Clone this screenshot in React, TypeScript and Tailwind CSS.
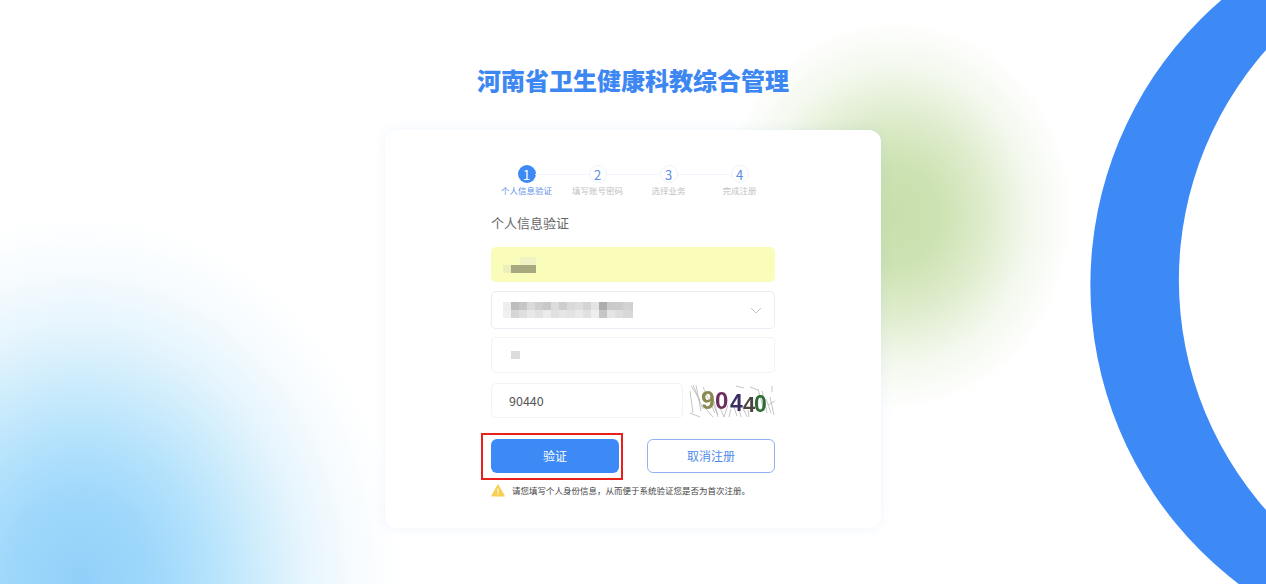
const STEPS = [
  { num: 1, label: '个人信息验证' },
  { num: 2, label: '填写账号密码' },
  { num: 3, label: '选择业务' },
  { num: 4, label: '完成注册' },
]

// mosaic cells of the blurred-out select value
const SELECT_TOP = ['bg-[#eeeeee]', 'bg-[#bdbdbd]', 'bg-[#c6c6c6]', 'bg-[#dadada]', 'bg-[#cfcfcf]', 'bg-[#c8c8c8]', 'bg-[#dcdcdc]', 'bg-[#cdcdcd]', 'bg-[#d9d9d9]', 'bg-[#dedede]', 'bg-[#d4d4d4]', 'bg-[#e4e4e4]', 'bg-[#adadad]', 'bg-[#c9c9c9]', 'bg-[#cbcbcb]', 'bg-[#d2d2d2]']
const SELECT_BOTTOM = ['bg-[#f0f0f0]', 'bg-[#d6d6d6]', 'bg-[#dfdfdf]', 'bg-[#e8e8e8]', 'bg-[#e2e2e2]', 'bg-[#ebebeb]', 'bg-[#e0e0e0]', 'bg-[#e6e6e6]', 'bg-[#e3e3e3]', 'bg-[#e9e9e9]', 'bg-[#e1e1e1]', 'bg-[#eeeeee]', 'bg-[#c6c6c6]', 'bg-[#e5e5e5]', 'bg-[#dedede]', 'bg-[#d8d8d8]']

function StepBar() {
  return (
    <div className="flex w-[284px] justify-center">
      {STEPS.map((step, i) => (
        <div key={step.num} className="relative flex w-[71px] shrink-0 flex-col items-center">
          {i < STEPS.length - 1 && (
            <div className="absolute left-[44px] top-[9px] h-px w-[53px] bg-[#eef4fd]" />
          )}
          <div
            className={
              i === 0
                ? 'flex h-[18px] w-[18px] items-center justify-center rounded-full bg-[#3d8af7] text-[13px] leading-none text-white'
                : 'flex h-[18px] w-[18px] items-center justify-center rounded-full border border-[#eef3fb] bg-white text-[13px] leading-none text-[#5a8ddf]'
            }
          >
            {step.num}
          </div>
          <div
            className={
              i === 0
                ? 'mt-px whitespace-nowrap text-[8.5px] leading-[12px] text-[#5b8fe6]'
                : 'mt-px whitespace-nowrap text-[8.5px] leading-[12px] text-[#c2c2c2]'
            }
          >
            {step.label}
          </div>
        </div>
      ))}
    </div>
  )
}

function Captcha() {
  return (
    <svg width="87" height="35" viewBox="0 0 87 35" className="shrink-0 blur-[0.3px]">
      <g stroke="#b8b8b8" strokeWidth="0.8" fill="none">
        <path d="M3 3l9 14M8 2l5 26M2 8l3 22M5 2l10 24M15 4l12 26M22 14l8 18M26 18l4 16M30 20l6 14M40 22l-4 12M43 26l-2 8M46 24l3 9M51 26l2 8M55 25l4 9M60 27l1 7M62 4l8 3M48 3l8 2M70 6l6 22M74 8l5 22M78 16l5 14M82 14l4 18M84 3v6M80 22l7-4M2 30l10 4M18 26l7 8" />
      </g>
      <text x="13" y="26" fontSize="25" fontWeight="700" fill="#8a8a50" fontFamily="Liberation Sans, sans-serif">9</text>
      <text x="27" y="26" fontSize="24" fontWeight="700" fill="#6d2f5c" fontFamily="Liberation Sans, sans-serif">0</text>
      <text x="42" y="28" fontSize="23" fontWeight="700" fill="#3c2f66" fontFamily="Liberation Sans, sans-serif">4</text>
      <text x="55" y="29" fontSize="22" fontWeight="700" fill="#4e4343" fontFamily="Liberation Sans, sans-serif">4</text>
      <text x="66" y="29" fontSize="23" fontWeight="700" fill="#2f6b35" fontFamily="Liberation Sans, sans-serif">0</text>
    </svg>
  )
}

export default function App() {
  return (
    <div className="relative h-[584px] w-[1266px] overflow-hidden bg-white font-['Noto_Sans_CJK_SC','Liberation_Sans',sans-serif]">
      {/* background decoration */}
      <div className="absolute inset-0 bg-[radial-gradient(ellipse_320px_370px_at_80px_585px,#92cff9_0%,#9dd7fb_22%,#b4e2fc_40%,#cdecfc_55%,#e6f5fd_70%,#f6fbfe_85%,#ffffff_100%)]" />
      <div className="absolute inset-0 bg-[radial-gradient(ellipse_178px_195px_at_895px_215px,rgba(201,223,171,1)_0%,rgba(205,226,178,1)_25%,rgba(220,235,201,0.95)_50%,rgba(240,246,232,0.8)_75%,rgba(255,255,255,0)_100%)]" />
      <svg className="absolute inset-0" width="1266" height="584" viewBox="0 0 1266 584">
        <path
          fillRule="evenodd"
          fill="#3d8af7"
          d="M1466 -90.5a375.5 375.5 0 1 0 0 751a375.5 375.5 0 1 0 0 -751ZM1526 -67a347 347 0 1 0 0 694a347 347 0 1 0 0 -694Z"
        />
      </svg>

      <div className="relative flex flex-col items-center pt-[63px]">
        <h1 className="text-[24px] font-black leading-[34px] text-[#3d87f2]">河南省卫生健康科教综合管理</h1>

        <div className="mt-[33px] flex h-[398px] w-[496px] flex-col items-center rounded-xl bg-white pt-[35px] shadow-[0_0_12px_rgba(90,150,230,0.1)]">
          <StepBar />

          <div className="mt-[18px] w-[284px]">
            <div className="text-[13px] leading-[18px] text-[#666666]">个人信息验证</div>

            <div className="mt-[15px] flex h-[35px] flex-col justify-center rounded-[5px] bg-[#f9fdb9] pl-[12px]">
              <div className="ml-[17px] h-[8px] w-[16px] bg-[#f0f2c4]" />
              <div className="flex">
                <div className="h-[8px] w-[8px] bg-[#eceebb]" />
                <div className="h-[8px] w-[25px] bg-[#a9a980]" />
              </div>
            </div>

            <div className="mt-[9px] flex h-[38px] items-center justify-between rounded-[5px] border border-[#e9ecf2] bg-white pl-[11px] pr-[12px]">
              <div className="flex flex-col">
                <div className="flex">
                  {SELECT_TOP.map((c, i) => (
                    <div key={i} className={`h-[8px] w-[8px] ${c}`} />
                  ))}
                  <div className="h-[8px] w-[2px] bg-[#cfcfcf]" />
                </div>
                <div className="flex">
                  {SELECT_BOTTOM.map((c, i) => (
                    <div key={i} className={`h-[8px] w-[8px] ${c}`} />
                  ))}
                  <div className="h-[8px] w-[2px] bg-[#d8d8d8]" />
                </div>
              </div>
              <svg width="12" height="7" viewBox="0 0 12 7" fill="none" stroke="#c4c7cc" strokeWidth="1">
                <path d="M1 1l5 5 5-5" />
              </svg>
            </div>

            <div className="mt-[8px] flex h-[36px] items-center rounded-[5px] border border-[#f1f3f7] bg-white pl-[19px]">
              <div className="h-[8px] w-[9px] bg-[#dcdcdc]" />
            </div>

            <div className="mt-[10px] flex items-center gap-[5px]">
              <div className="flex h-[35px] w-[192px] items-center rounded-[5px] border border-[#f1f3f7] bg-white pl-[17px] pt-px text-[12.5px] text-[#555555]">
                90440
              </div>
              <Captcha />
            </div>

            <div className="mt-[21px] flex justify-between">
              <div className="relative">
                <button
                  type="button"
                  className="h-[34px] w-[128px] rounded-[6px] bg-[#3d8af7] text-[12px] text-white"
                >
                  验证
                </button>
                <div className="absolute left-[-10px] top-[-6px] h-[47px] w-[142px] border-2 border-[#e8211d]" />
              </div>
              <button
                type="button"
                className="h-[34px] w-[128px] rounded-[6px] border border-[#8fb5ee] bg-white text-[12px] text-[#4f8beb]"
              >
                取消注册
              </button>
            </div>

            <div className="mt-[11px] flex items-center gap-[7px]">
              <svg width="14" height="13" viewBox="0 0 14 13" className="shrink-0">
                <path d="M7 1L13.2 12H.8Z" fill="#f7cf52" stroke="#f7cf52" strokeWidth="1.2" strokeLinejoin="round" />
                <path d="M7 4.6v4M7 9.6v1" stroke="#ffffff" strokeWidth="1.1" />
              </svg>
              <span className="whitespace-nowrap text-[8.5px] leading-[13px] text-[#444444]">
                请您填写个人身份信息，从而便于系统验证您是否为首次注册。
              </span>
            </div>
          </div>
        </div>
      </div>
    </div>
  )
}
